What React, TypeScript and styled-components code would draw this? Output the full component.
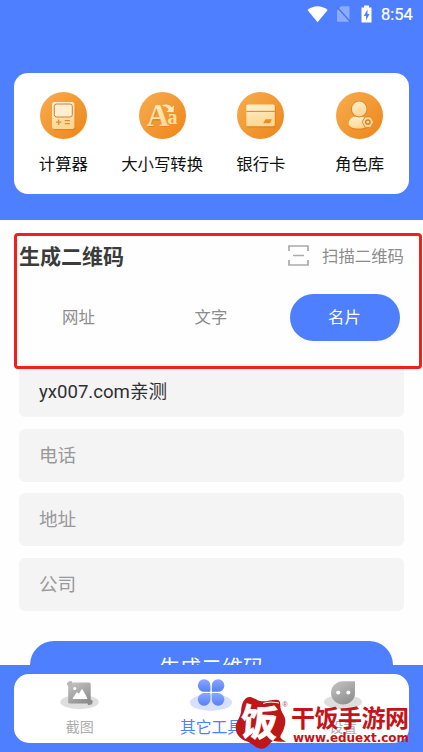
import React from 'react';
import styled, { createGlobalStyle } from 'styled-components';

const GlobalStyle = createGlobalStyle`
  * { box-sizing: border-box; }
  body { margin: 0; background: #fefefe; overflow: hidden; }
`;

const blue = '#4d7fff';

const Screen = styled.div`
  position: relative;
  width: 423px;
  height: 752px;
  overflow: hidden;
  display: flex;
  flex-direction: column;
  background: #fefefe;
  font-family: Roboto, 'Noto Sans CJK SC', sans-serif;
`;

const Header = styled.header`
  flex: none;
  height: 220px;
  padding: 0 14px;
  background: ${blue};
`;

const StatusBar = styled.div`
  height: 73px;
  display: flex;
  justify-content: flex-end;
  align-items: flex-start;
  padding: 5px 0 0;
  margin-right: -4px;
`;

const StatusIcons = styled.svg`
  display: block;
  margin-right: 7px;
`;

const Clock = styled.span`
  width: 32px;
  font-size: 16.5px;
  line-height: 20px;
  font-weight: 400;
  color: #fff;
  white-space: nowrap;
  -webkit-text-stroke: 0.2px #fff;
`;

const ToolCard = styled.div`
  height: 121px;
  padding-top: 19px;
  border-radius: 14px;
  background: #fff;
  display: grid;
  grid-template-columns: repeat(4, 98.75px);
`;

const Tool = styled.div`
  display: flex;
  flex-direction: column;
  align-items: center;
  gap: 14px;
`;

const ToolIcon = styled.svg`
  width: 47px;
  height: 47px;
  display: block;
`;

const ToolLabel = styled.span`
  font-size: 16.4px;
  line-height: 24px;
  color: #111;
  white-space: nowrap;
`;

const Main = styled.main`
  flex: 1;
  min-height: 0;
  overflow: hidden;
  padding: 0 19px;
`;

const SectionHead = styled.div`
  display: flex;
  align-items: center;
  justify-content: space-between;
  height: 74px;
`;

const Title = styled.h2`
  margin: 0;
  font-size: 21px;
  line-height: 30px;
  font-weight: 700;
  color: #3b3b3b;
`;

const Scan = styled.div`
  display: flex;
  align-items: center;
  gap: 13px;
  font-size: 16.4px;
  line-height: 24px;
  color: #8c8c8c;
`;

const ScanGlyph = styled.svg`
  display: block;
  margin-bottom: 3px;
`;

const Tabs = styled.div`
  display: grid;
  grid-template-columns: 119px 146px 120px;
  height: 48px;
  justify-items: center;
`;

const Tab = styled.div<{ $active?: boolean }>`
  width: 110px;
  height: 47px;
  margin-left: ${(p) => (p.$active ? '1px' : '0')};
  border-radius: 24px;
  background: ${(p) => (p.$active ? blue : 'transparent')};
  color: ${(p) => (p.$active ? '#fff' : '#8c8c8c')};
  font-size: 16.4px;
  line-height: 48px;
  text-align: center;
`;

const Form = styled.div`
  display: flex;
  flex-direction: column;
  gap: 11.5px;
  margin-top: 22px;
`;

const Field = styled.div<{ $filled?: boolean }>`
  height: 53px;
  border-radius: 6px;
  padding-left: 20px;
  background: #f4f4f4;
  font-size: 18.6px;
  line-height: ${(p) => (p.$filled ? '56px' : '55px')};
  color: ${(p) => (p.$filled ? '#303030' : '#999')};
`;

const Submit = styled.div`
  height: 52px;
  margin: 30px 11px 0;
  border-radius: 24px;
  background: ${blue};
  color: #fff;
  text-align: center;
  font-size: 21px;
  line-height: 55px;
`;

const Footer = styled.footer`
  flex: none;
  height: 87px;
  padding: 9px 14px 0;
  background: ${blue};
`;

const NavCard = styled.nav`
  height: 69px;
  border-radius: 15px;
  background: #fff;
  display: grid;
  grid-template-columns: repeat(3, 1fr);
`;

const NavItem = styled.div<{ $active?: boolean }>`
  display: flex;
  flex-direction: column;
  align-items: center;
  padding-top: 4px;
  font-size: ${(p) => (p.$active ? '15.8px' : '14px')};
  line-height: 22px;
  gap: ${(p) => (p.$active ? '5px' : '4px')};
  color: ${(p) => (p.$active ? blue : '#adadad')};
`;

const NavIcon = styled.svg`
  width: 46px;
  height: 34px;
  display: block;
  flex: none;
`;

const Highlight = styled.div`
  position: absolute;
  left: 14px;
  top: 233px;
  width: 408px;
  height: 136px;
  border: 3px solid #f0201c;
  border-radius: 4px;
`;

const Watermark = styled.svg`
  position: absolute;
  left: 232px;
  top: 694px;
`;

const GradientDefs = styled.svg`
  display: block;
  width: 0;
  height: 0;
`;

const Defs = () => (
  <GradientDefs>
    <defs>
      <linearGradient id="orange" x1="0" y1="0" x2="1" y2="1">
        <stop offset="0" stopColor="#f8ad50" />
        <stop offset="1" stopColor="#ed8518" />
      </linearGradient>
      <linearGradient id="cream" x1="0" y1="0" x2="0.3" y2="1">
        <stop offset="0" stopColor="#fff2cf" />
        <stop offset="1" stopColor="#ffd792" />
      </linearGradient>
      <linearGradient id="grey" x1="0" y1="0" x2="0.6" y2="1">
        <stop offset="0" stopColor="#c5c5c5" />
        <stop offset="1" stopColor="#919191" />
      </linearGradient>
      <linearGradient id="petal" x1="0" y1="0" x2="0" y2="1">
        <stop offset="0" stopColor="#8ba6ff" />
        <stop offset="1" stopColor="#5680f8" />
      </linearGradient>
    </defs>
  </GradientDefs>
);

const Disc = ({ children }: { children: React.ReactNode }) => (
  <ToolIcon viewBox="0 0 47 47">
    <circle cx="23.5" cy="23.5" r="23.5" fill="url(#orange)" />
    {children}
  </ToolIcon>
);

const CalculatorIcon = () => (
  <Disc>
    <rect x="13" y="11.2" width="22.5" height="27" rx="2.5" fill="#cf741c" opacity=".45" />
    <rect x="12" y="10" width="22.5" height="27" rx="2.5" fill="url(#cream)" />
    <rect x="14.3" y="12" width="18" height="13" rx="2.4" fill="#ffefd0" stroke="#c3843c" strokeWidth="1" />
    <path d="M16 30.2h5.4M18.7 27.5v5.4M24.7 28.7h5.2M24.7 31.7h5.2" stroke="#e08d30" strokeWidth="1.3" />
  </Disc>
);

const CaseIcon = () => (
  <Disc>
    <g fontFamily="'Liberation Serif', serif" fontWeight="700">
      <text x="8.8" y="35.2" fontSize="30" fill="#c66d18" opacity=".4">A</text>
      <text x="7.8" y="34.2" fontSize="31" fill="url(#cream)">A</text>
      <text x="28.4" y="32.2" fontSize="20" fill="url(#cream)">a</text>
    </g>
    <path d="M22.5 13.8c4.8-2.4 8.2-1 10.2 1.5l2.2-2-.3 6.7h-7.3l2.4-2.2c-1.5-2.5-3.4-3.7-7.2-4z" fill="#ffe9bb" />
  </Disc>
);

const CardIcon = () => (
  <Disc>
    <rect x="10.2" y="13.8" width="28.5" height="21.7" rx="1.5" fill="#cb701d" opacity=".5" />
    <rect x="9.3" y="12.5" width="28.5" height="21.7" rx="1.5" fill="url(#cream)" />
    <path d="M9.3 19.4h28.5" stroke="#dc8d36" strokeWidth="1.1" />
    <path d="M28.5 27.2h6.3l-1.8 4h-6.8z" fill="#e78d23" />
  </Disc>
);

const RoleIcon = () => (
  <Disc>
    <path d="M21 25.8c-5 .3-8.3 4-8.2 7.7.2 3.4 5.5 4.5 10.8 4.3 4-.2 8-1.2 9-3.5-1-6-5-8.7-11.6-8.5z" fill="#ca711b" opacity=".45" />
    <path d="M18 24.7c-3.5 1-5.4 4-5.3 7 .2 3.8 5.5 5 10.8 4.8 4-.2 7.4-1.2 8.2-3.5 0-4-2.3-7.4-5.6-8.5z" fill="url(#cream)" />
    <circle cx="23.2" cy="17.2" r="8.2" fill="#d37d2a" />
    <circle cx="23.2" cy="17" r="7.4" fill="url(#cream)" />
    <path d="M29.1 24.9h5.6l2.9 5-2.9 5.5h-5.6l-2.9-5.5z" fill="#ffdda1" stroke="#dd8c38" />
    <circle cx="31.9" cy="30.1" r="2.2" fill="#ffe1ae" stroke="#dc821f" strokeWidth="1.5" />
  </Disc>
);

const ScanIcon = () => (
  <ScanGlyph width="21" height="21" viewBox="0 0 21 21" fill="none" stroke="#aaa" strokeWidth="1.7">
    <path d="M1 6V1h19v5M1 15v5h19v-5M5 10.5h11" />
  </ScanGlyph>
);

const CropNavIcon = () => (
  <NavIcon viewBox="0 0 46 34">
    <ellipse cx="22.5" cy="24" rx="19.2" ry="7.2" fill="#dedede" />
    <rect x="11.2" y="4.5" width="22.5" height="21" rx="1.5" fill="url(#grey)" />
    <path d="M9.8 5.4 12 3.2h3v5h-4z" fill="#b7b7b7" />
    <path d="M30 21.5h3.8l2 1.6-.8 3.2-4 1z" fill="#8c8c8c" />
    <path d="M16 20.5l4-6 2 2 3-5 5 9z" fill="#fff" stroke="#fff" strokeLinejoin="round" />
    <circle cx="17.8" cy="10.5" r="1.6" fill="#fff" />
  </NavIcon>
);

const CloverNavIcon = () => (
  <NavIcon viewBox="0 0 46 34">
    <ellipse cx="23" cy="24.4" rx="21" ry="8.4" fill="#d7e0ff" />
    <g fill="url(#petal)">
      <path d="M22.4 13.8h-5.8a6.3 6.3 0 1 1 5.8-6.2z" />
      <path d="M23.8 13.8h5.8a6.3 6.3 0 1 0-5.8-6.2z" />
      <path d="M22.4 15.1h-5.8a6.3 6.3 0 1 0 5.8 6.2z" />
      <path d="M23.8 15.1h5.8a6.3 6.3 0 1 1-5.8 6.2z" />
    </g>
  </NavIcon>
);

const ChatNavIcon = () => (
  <NavIcon viewBox="0 0 46 34">
    <ellipse cx="23" cy="24" rx="19" ry="7.2" fill="#dedede" />
    <path d="M23 3.2h12v12a12 11.7 0 1 1-12-12z" fill="url(#grey)" />
    <circle cx="18.2" cy="14.5" r="2" fill="#fff" />
    <circle cx="28.3" cy="14.5" r="2" fill="#fff" />
  </NavIcon>
);

const tools = [
  { label: '计算器', Icon: CalculatorIcon },
  { label: '大小写转换', Icon: CaseIcon },
  { label: '银行卡', Icon: CardIcon },
  { label: '角色库', Icon: RoleIcon },
];

export default function App() {
  return (
    <Screen>
      <GlobalStyle />
      <Header>
        <StatusBar>
          <StatusIcons width="67" height="20" viewBox="0 0 67 20">
            <path d="M.5 5Q10.5-2.5 20.7 5L10.5 17.3z" fill="#fff" />
            <path d="M34 1.3h8.5v15.5H30V5.3z" fill="#8babff" />
            <path d="M30 2l14 15.5" stroke="#4878dc" strokeWidth="1.4" />
            <path d="M57 .5h5v2h2.5v15h-10v-15H57z" fill="#fff" />
            <path d="M60.5 4.5L56.8 11h2.3v4.5L62.5 9h-2z" fill={blue} />
          </StatusIcons>
          <Clock>8:54</Clock>
        </StatusBar>
        <ToolCard>
          {tools.map(({ label, Icon }) => (
            <Tool key={label}>
              <Icon />
              <ToolLabel>{label}</ToolLabel>
            </Tool>
          ))}
        </ToolCard>
      </Header>
      <Main>
        <SectionHead>
          <Title>生成二维码</Title>
          <Scan>
            <ScanIcon />
            <span>扫描二维码</span>
          </Scan>
        </SectionHead>
        <Tabs>
          <Tab>网址</Tab>
          <Tab>文字</Tab>
          <Tab $active>名片</Tab>
        </Tabs>
        <Form>
          <Field $filled>yx007.com亲测</Field>
          <Field>电话</Field>
          <Field>地址</Field>
          <Field>公司</Field>
        </Form>
        <Submit>生成二维码</Submit>
      </Main>
      <Footer>
        <NavCard>
          <NavItem>
            <CropNavIcon />
            <span>截图</span>
          </NavItem>
          <NavItem $active>
            <CloverNavIcon />
            <span>其它工具</span>
          </NavItem>
          <NavItem>
            <ChatNavIcon />
            <span>设置</span>
          </NavItem>
        </NavCard>
      </Footer>
      <Highlight />
      <Watermark width="182" height="58" viewBox="0 0 182 58">
        <path
          d="M13 5.3C15 3 17 2.6 20 3.4c4 1.400 6 3.600 10 3.900 6 .4 11-2.500 16-1.300 3 .8 2 5 2.700 8.700.8 4 4.600 7 4.600 12 0 4-1 7-2 9.600-1 3-3 4.700-3 7 1.500 2.500 3.500 3.200 6 4-4 1.200-9 .2-13-.6-4 2-6 7.900-11.600 8-6 0-9-5-15-7.400C8 45 3.500 40 3.700 33c.3-6 4.500-9 5.300-15C9.500 12.500 10 8.500 13 5.300z"
          fill="#bd1718"
        />
        <path d="M31 9.500c5-2 11-1.500 16-.5" stroke="#fff" strokeWidth="1" fill="none" />
        <text x="9" y="42" fontSize="37" fontWeight="700" fill="#fff" stroke="#fff" strokeWidth=".8" fontFamily="'Noto Sans CJK SC', sans-serif" transform="rotate(4 28 28)">饭</text>
        <text x="50.5" y="13" fontSize="7" fill="#a94b55" fontFamily="'Liberation Sans', sans-serif">®</text>
        <text x="59" y="33" fontSize="24" fontWeight="700" textLength="118" fill="#c41419" fontFamily="'Noto Sans CJK SC', sans-serif">干饭手游网</text>
        <text x="61" y="47.500" fontSize="13" fontWeight="700" textLength="116" lengthAdjust="spacingAndGlyphs" fill="#c41419" fontFamily="'DejaVu Sans', sans-serif">www.eduext.com</text>
      </Watermark>
      <Defs />
    </Screen>
  );
}
